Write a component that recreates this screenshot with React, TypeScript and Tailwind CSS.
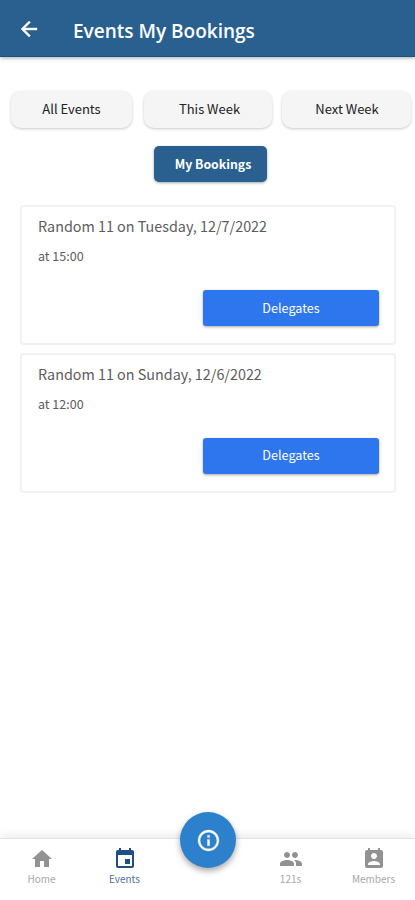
import {
  MdArrowBack,
  MdEvent,
  MdHome,
  MdInfoOutline,
  MdPeople,
  MdPermContactCalendar,
} from 'react-icons/md'

const bookings = [
  { title: 'Random 11 on Tuesday, 12/7/2022', time: 'at 15:00' },
  { title: 'Random 11 on Sunday, 12/6/2022', time: 'at 12:00' },
]

const filters = [
  { label: 'All Events', box: 'w-[121px]' },
  { label: 'This Week', box: 'ml-3 w-[128px] pl-[3px]' },
  { label: 'Next Week', box: 'ml-2.5 w-[129px] pl-px' },
]

const tabs = [
  { label: 'Home', Icon: MdHome, active: false },
  { label: 'Events', Icon: MdEvent, active: true },
  null,
  { label: '121s', Icon: MdPeople, active: false },
  { label: 'Members', Icon: MdPermContactCalendar, active: false },
]

function BookingCard({ title, time }: { title: string; time: string }) {
  return (
    <div className="flex h-[140px] flex-col rounded-[4px] border-2 border-[#f2f2f2] bg-white pl-4 pr-[15px]">
      <h2 className="mt-[9px] text-[14.35px] leading-5 font-normal text-[#5c5c5c]">{title}</h2>
      <p className="mt-[11px] text-[12.5px] leading-[18px] text-[#5c5c5c]">{time}</p>
      <button className="mt-[25px] h-9 w-[176px] self-end rounded-[3px] bg-[#2e76ee] text-[12.6px] text-white shadow-[0_1px_3px_rgba(0,0,0,0.35)]">
        Delegates
      </button>
    </div>
  )
}

export default function App() {
  return (
    <div className="flex h-[900px] w-[415px] flex-col overflow-hidden bg-white font-['Noto_Sans_CJK_SC',sans-serif]">
      <header className="flex h-[57px] shrink-0 items-center border-b border-[#1a5188] bg-[#2a608f] pl-[17px] text-white shadow-[0_1px_4px_rgba(0,0,0,0.35)]">
        <MdArrowBack className="mt-px size-6 [&>path:last-child]:stroke-[0.4]" />
        <h1 className="mt-[6px] ml-8 font-['Open_Sans',sans-serif] text-[19px] font-semibold">Events My Bookings</h1>
      </header>

      <main className="flex-1">
        <div className="mt-[34px] ml-[11px] flex">
          {filters.map(f => (
            <button
              key={f.label}
              className={`h-[37px] shrink-0 rounded-[10px] bg-[#f5f5f5] pb-[2px] text-[13px] text-[#222] shadow-[0_1px_3px_rgba(0,0,0,0.22)] ${f.box}`}
            >
              {f.label}
            </button>
          ))}
        </div>
        <button className="mt-[18px] ml-[154px] block h-[36px] w-[113px] rounded-[5px] bg-[#2a608f] pl-[5px] text-[12.3px] font-bold text-white shadow-[0_1px_3px_rgba(0,0,0,0.35)]">
          My Bookings
        </button>

        <div className="mt-[23px] ml-5 flex w-[376px] flex-col gap-[7.5px]">
          {bookings.map(b => (
            <BookingCard key={b.title} {...b} />
          ))}
        </div>
      </main>

      <nav className="relative grid h-[62px] shrink-0 grid-cols-5 border-t border-[#e2e2e2] bg-white shadow-[0_-2px_10px_rgba(0,0,0,0.09)]">
        {tabs.map((tab, i) =>
          tab ? (
            <div
              key={tab.label}
              className={`flex flex-col items-center pt-2 ${tab.active ? 'text-[#1e4e85]' : 'text-[#929292]'}`}
            >
              <tab.Icon className="size-6" />
              <span className="text-[10px] leading-4 opacity-80">{tab.label}</span>
            </div>
          ) : (
            <div key={i} />
          ),
        )}
        <button className="absolute -top-[27px] left-[180px] flex size-14 items-center justify-center rounded-full bg-[#2d80cc] text-white shadow-[0_3px_6px_rgba(0,0,0,0.35)]">
          <MdInfoOutline className="size-[25px] [&>path:last-child]:stroke-[0.3]" />
        </button>
      </nav>
    </div>
  )
}
